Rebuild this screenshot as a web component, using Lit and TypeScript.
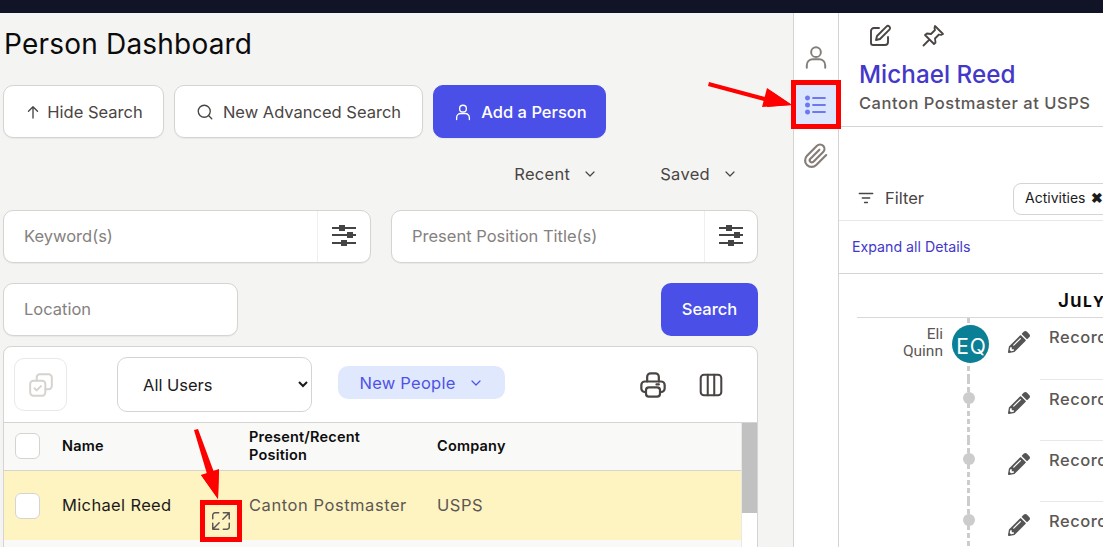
import { LitElement, html, css, svg } from "lit";
import { customElement } from "lit/decorators.js";

const ic = (size: number, body: unknown, sw = 2, cls = "") => html`<svg class=${cls} width=${size} height=${size} viewBox="0 0 24 24" fill="none" stroke="currentColor" stroke-width=${sw} stroke-linecap="round" stroke-linejoin="round">${body}</svg>`;

const person = svg`<circle cx="12" cy="7.5" r="4.5"/><path d="M3.5 22v-2.5a5.5 5.5 0 0 1 5.5-5.5h6a5.5 5.5 0 0 1 5.5 5.5V22"/>`;
const chevron = svg`<path d="M6 9l6 6 6-6"/>`;
const sliders = html`<svg class="sliders" width="24" height="22" viewBox="0 0 24 22"><g fill="#444"><rect x="0" y="3" width="24" height="2"/><rect x="0" y="10" width="24" height="2"/><rect x="0" y="18" width="24" height="2"/><rect x="7" y="1" width="6" height="6"/><rect x="15" y="8" width="6" height="6"/><rect x="9" y="16" width="6" height="6"/></g></svg>`;
const pencil = html`<svg class="pencil" width="22" height="22" viewBox="0 0 512 512"><path fill="#555" d="M497.9 142.100l-46.100 46.100c-4.700 4.700-12.300 4.700-17 0l-111-111c-4.700-4.700-4.700-12.300 0-17l46.100-46.100c18.700-18.700 49.100-18.700 67.900 0l60.100 60.100c18.800 18.700 18.800 49.100 0 67.900zM284.200 99.800L21.600 362.400.4 483.900c-2.900 16.400 11.400 30.600 27.800 27.800l121.500-21.300 262.600-262.600c4.700-4.700 4.700-12.300 0-17l-111-111c-4.800-4.700-12.400-4.700-17.100 0zM124.100 339.900c-5.500-5.500-5.500-14.300 0-19.800l154-154c5.500-5.500 14.300-5.500 19.800 0s5.500 14.300 0 19.800l-154 154c-5.500 5.500-14.300 5.500-19.800 0zM88 424h48v36.300l-64.500 11.300-31.100-31.100L51.700 376H88v48z"/></svg>`;

@customElement("app-root")
export class AppRoot extends LitElement {
  static styles = css`
    :host { display: block; position: relative; width: 1103px; height: 547px; overflow: hidden; font-family: Inter, "Liberation Sans", sans-serif; color: #4a4543; background: #fff; }
    .top { height: 13px; background: #111427; }
    .main { display: flex; height: 534px; }
    .left { width: 793px; flex: none; background: #f4f4f3; padding: 0 35px 0 3px; box-sizing: border-box; overflow: hidden; }
    h1 { margin: 0; font-size: 28px; font-weight: 400; color: #0b0b0b; line-height: 34px; padding: 14px 0 0 1px; letter-spacing: .2px; }
    .actions { display: flex; gap: 10px; margin-top: 24px; }
    .btn { height: 53px; box-sizing: border-box; display: flex; align-items: center; gap: 9px; border-radius: 10px; border: 1px solid #d6d4d1; background: #fff; font-size: 16.5px; justify-content: center; color: #4a4543; box-shadow: 0 1px 1px rgba(0,0,0,.05); }
    .b1 { width: 161px; gap: 5px; }
    .b2 { width: 249px; gap: 9px; }
    .primary { width: 173px; background: #4a4fe8; border-color: #4a4fe8; color: #fff; font-weight: 500; padding-left: 2px; }
    .recents { display: flex; justify-content: flex-end; height: 72px; align-items: center; gap: 62px; padding-right: 20px; font-size: 16.5px; letter-spacing: .3px; }
    .recents span { display: flex; align-items: center; gap: 12px; }
    .inputs { display: flex; gap: 20px; }
    .input { height: 53px; box-sizing: border-box; background: #fff; border: 1px solid #d6d4d1; border-radius: 10px; display: flex; align-items: center; font-size: 16.5px; color: #85817e; box-shadow: 0 1px 1px rgba(0,0,0,.05); }
    .input .label { flex: 1; padding: 0 0 2px 20px; }
    .input .tune { width: 53px; height: 100%; display: flex; align-items: center; justify-content: center; border-left: 1px solid #f0efed; box-sizing: border-box; padding: 0 1px 3px 0; }
    .w1 { width: 368px; }
    .w2 { width: 367px; }
    .row3 { display: flex; justify-content: space-between; margin-top: 20px; }
    .loc { width: 235px; }
    .search { width: 97px; height: 53px; box-sizing: border-box; padding-bottom: 2px; border-radius: 10px; background: #4a4fe8; color: #fff; font-weight: 500; font-size: 16.5px; display: flex; align-items: center; justify-content: center; }
    .card { margin-top: 10px; height: 260px; border: 1px solid #d6d4d1; border-radius: 8px 8px 0 0; background: #fff; box-sizing: border-box; overflow: hidden; }
    .tools { height: 76px; display: flex; align-items: center; border-bottom: 1px solid #d6d4d1; box-sizing: border-box; padding-left: 10px; }
    .copy { width: 53px; height: 53px; box-sizing: border-box; border: 1px solid #ebe9e7; border-radius: 10px; display: flex; align-items: center; justify-content: center; color: #d6d2ce; }
    select { margin-left: 50px; width: 195px; height: 55px; border: 1px solid #d6d4d1; border-radius: 10px; background: #fff; font: 16.5px Inter, sans-serif; color: #1b1b1b; padding-left: 21px; outline: none; }
    .pill { margin-left: 26px; width: 167px; height: 33px; border-radius: 10px; background: #dfe8fd; color: #4f52e6; font-size: 16.5px; letter-spacing: .25px; display: flex; align-items: center; justify-content: center; gap: 12px; margin-top: -4px; }
    .tool-r { margin-left: auto; display: flex; align-items: center; gap: 31px; padding-right: 33px; color: #4a4543; }
    .tbl { display: flex; height: 183px; }
    .rows { flex: 1; min-width: 0; }
    .scroll { width: 15px; background: #fff; border-left: 1px solid #e8e8e8; }
    .thumb { height: 90px; background: #c1c1c1; }
    .gr { display: grid; grid-template-columns: 58px 187px 188px 1fr; align-items: center; }
    .head { height: 48px; padding-bottom: 1px; background: #f9f9f8; border-bottom: 1px solid #d6d4d1; box-sizing: border-box; font-size: 14.5px; font-weight: 600; color: #0d0d0d; line-height: 18px; letter-spacing: .2px; }
    .rowy { height: 69px; background: #fdf4c1; font-size: 16.5px; color: #5c5754; letter-spacing: .55px; }
    .after { height: 66px; background: #f9f9f8; }
    .cb { margin-left: 11px; width: 25px; height: 26px; box-sizing: border-box; border: 1px solid #d6d4d1; border-radius: 6px; background: #fff; }
    .name { display: flex; justify-content: space-between; align-self: stretch; color: #1b1b1b; letter-spacing: .35px; }
    .name span { align-self: center; padding-bottom: 1px; }
    .cell { padding-bottom: 1px; }
    .name svg { align-self: flex-end; margin: 0 17px 8px 0; color: #5c5754; }
    .side { width: 46px; flex: none; box-sizing: border-box; border-left: 1px solid #d4d4d4; border-right: 1px solid #d4d4d4; background: #fff; display: flex; flex-direction: column; align-items: stretch; padding-top: 20px; color: #857d78; }
    .si { height: 49px; display: flex; align-items: center; justify-content: center; }
    .si.first { height: 47px; }
    .si.on { background: #dbe6fe; color: #6f78ee; }
    .si.clip { margin-top: 2px; }
    .right { flex: 1; min-width: 0; overflow: hidden; background: #fff; white-space: nowrap; }
    .rh { height: 114px; box-sizing: border-box; border-bottom: 1px solid #d4d4d4; padding-left: 20px; }
    .ricons { display: flex; gap: 29px; padding: 11px 0 0 9px; height: 24px; color: #4a4543; }
    .rname { font-size: 24.2px; font-weight: 500; color: #4338ca; line-height: 30px; margin-top: 12px; letter-spacing: .05px; }
    .rsub { font-size: 16.5px; font-weight: 500; color: #5c5754; line-height: 20px; margin-top: 3px; letter-spacing: .52px; }
    .filter { height: 94px; box-sizing: border-box; border-bottom: 1px solid #e7e7e7; display: flex; align-items: flex-end; padding: 0 0 5px 18px; font-size: 16.5px; }
    .filter .fl { display: flex; align-items: center; gap: 10px; height: 31px; padding-bottom: 2px; }
    .chip { margin-left: 89px; height: 32px; box-sizing: border-box; border: 1px solid #d6d4d1; border-radius: 8px; padding: 0 11px 3px; display: flex; align-items: center; gap: 6px; font-size: 14px; color: #1b1b1b; width: 140px; flex: none; }
    .expand { height: 53px; box-sizing: border-box; border-bottom: 1px solid #d4d4d4; display: flex; align-items: center; padding: 0 0 2px 13px; color: #4338ca; font-size: 14.2px; }
    .month { margin-left: 18px; height: 44px; box-sizing: border-box; border-bottom: 1px solid #d8d8d8; display: flex; align-items: center; padding: 9px 0 0 201px; font-size: 19px; font-weight: 600; font-variant: small-caps; color: #0b0b0b; letter-spacing: 1px; }
    .tr { display: grid; grid-template-columns: 86px 9px 37px 19px 22px 10px 1fr; margin-left: 18px; height: 61px; }
    .author { font-family: Roboto, sans-serif; font-size: 15.5px; color: #5c5754; text-align: right; line-height: 17px; padding-top: 8px; white-space: normal; }
    .node { grid-column: 3; display: flex; flex-direction: column; align-items: center; background: linear-gradient(#ccc 60%, transparent 60%) calc(50% - 2px) top / 3px 8px repeat-y; }
    .av { margin-top: 7px; width: 37px; height: 38px; box-sizing: border-box; padding: 4px 0 0 2px; border-radius: 50%; background: #0b7f95; color: #fff; font-size: 21px; display: flex; align-items: center; justify-content: center; letter-spacing: 1px; }
    .dot { margin: 13px 4px 0 0; width: 12px; height: 12px; border-radius: 50%; background: #ccc; }
    .pen { grid-column: 5; padding-top: 13px; }
    .txt { grid-column: 7; border-top: 1px solid #e7e7e7; font-size: 16.5px; font-weight: 500; color: #5c5754; padding: 9px 0 0 9px; letter-spacing: .5px; }
    .txt.first { border-top: none; padding-top: 9px; }
    .over { position: absolute; left: 0; top: 0; pointer-events: none; }
  `;

  row(first = false) {
    return html`<div class="tr">
      ${first ? html`<div class="author">Eli<br />Quinn</div>` : ""}
      <div class="node">${first ? html`<div class="av">EQ</div>` : html`<div class="dot"></div>`}</div>
      <div class="pen">${pencil}</div>
      <div class="txt ${first ? "first" : ""}">Recorded</div>
    </div>`;
  }

  render() {
    return html`
      <div class="top"></div>
      <div class="main">
        <div class="left">
          <h1>Person Dashboard</h1>
          <div class="actions">
            <div class="btn b1">${ic(18, svg`<path d="M12 20V5M6 11l6-6 6 6"/>`, 1.8)}Hide Search</div>
            <div class="btn b2">${ic(18, svg`<circle cx="11" cy="11" r="8"/><path d="M17 17l4 4"/>`, 1.8)}New Advanced Search</div>
            <div class="btn primary">${ic(18, person, 1.8)}Add a Person</div>
          </div>
          <div class="recents">
            <span>Recent ${ic(16, chevron, 1.8)}</span>
            <span>Saved ${ic(16, chevron, 1.8)}</span>
          </div>
          <div class="inputs">
            <div class="input w1"><div class="label">Keyword(s)</div><div class="tune">${sliders}</div></div>
            <div class="input w2"><div class="label">Present Position Title(s)</div><div class="tune">${sliders}</div></div>
          </div>
          <div class="row3">
            <div class="input loc"><div class="label">Location</div></div>
            <div class="search">Search</div>
          </div>
          <div class="card">
            <div class="tools">
              <div class="copy">${ic(26, svg`<rect x="2" y="8" width="14" height="14" rx="3"/><path d="M8 8V5a3 3 0 0 1 3-3h8a3 3 0 0 1 3 3v8a3 3 0 0 1-3 3h-3"/><path d="M6 15l2 2 4-4"/>`, 1.8)}</div>
              <select><option>All Users</option></select>
              <div class="pill">New People ${ic(16, chevron, 1.8)}</div>
              <div class="tool-r">
                ${ic(28, svg`<path d="M7 9V5a3 3 0 0 1 3-3h4a3 3 0 0 1 3 3v4"/><path d="M6 18H5a3 3 0 0 1-3-3v-3a3 3 0 0 1 3-3h14a3 3 0 0 1 3 3v3a3 3 0 0 1-3 3h-1"/><rect x="6" y="14" width="12" height="8" rx="2.5"/><path d="M15 11.5h2"/>`, 1.9)}
                ${ic(26, svg`<rect x="2.5" y="2.5" width="19" height="19" rx="3"/><path d="M9 2.5v19M15 2.5v19"/>`, 1.9)}
              </div>
            </div>
            <div class="tbl">
              <div class="rows">
                <div class="gr head"><div class="cb"></div><div>Name</div><div>Present/Recent<br />Position</div><div>Company</div></div>
                <div class="gr rowy">
                  <div class="cb"></div>
                  <div class="name"><span>Michael Reed</span>${ic(22, svg`<path d="M3 9.500V5.500a2.500 2.500 0 0 1 2.500-2.500H9.500M21 14.500v4a2.500 2.500 0 0 1-2.500 2.500H14.500"/><path d="M14.500 3H21v6.500M21 3l-7 7M9.500 21H3v-6.500M3 21l7-7"/>`, 1.6)}</div>
                  <div class="cell">Canton Postmaster</div>
                  <div class="cell">USPS</div>
                </div>
                <div class="after"></div>
              </div>
              <div class="scroll"><div class="thumb"></div></div>
            </div>
          </div>
        </div>
        <div class="side">
          <div class="si first">${ic(26, person, 1.8)}</div>
          <div class="si on">${ic(24, svg`<path d="M9 5h12M9 12h12M9 19h12"/><circle cx="3.5" cy="5" r="1.6" fill="currentColor"/><circle cx="3.5" cy="12" r="1.6" fill="currentColor"/><circle cx="3.5" cy="19" r="1.6" fill="currentColor"/>`, 1.8)}</div>
          <div class="si clip">${ic(26, svg`<path d="M21.4 11.1l-9.2 9.2a6 6 0 0 1-8.5-8.5l9.2-9.2a4 4 0 0 1 5.700 5.700l-9.2 9.2a2 2 0 0 1-2.800-2.800l8.500-8.500"/>`, 2)}</div>
        </div>
        <div class="right">
          <div class="rh">
            <div class="ricons">
              ${ic(24, svg`<path d="M11 4H6a3 3 0 0 0-3 3v12a2 2 0 0 0 2 2h12a3 3 0 0 0 3-3v-5"/><path d="M18.4 2.6a2.1 2.1 0 0 1 3 3L12 15l-4 1 1-4z"/>`, 1.9)}
              ${ic(24, svg`<path d="M14 2l8 8-2 1-2-.5-4 4 .5 4-1.500 1.500-9-9L6 9.500l4 .5 4-4-.5-2zM7.500 16.500L2.500 21.500"/>`, 1.8)}
            </div>
            <div class="rname">Michael Reed</div>
            <div class="rsub">Canton Postmaster at USPS</div>
          </div>
          <div class="filter">
            <div class="fl">${ic(18, svg`<path d="M3 6h18M7 12h10M10 18h4"/>`, 1.7)}Filter</div>
            <div class="chip">Activities <b>✖</b></div>
          </div>
          <div class="expand">Expand all Details</div>
          <div class="month">July</div>
          ${this.row(true)}${this.row()}${this.row()}${this.row()}
        </div>
      </div>
      <svg class="over" width="1103" height="547" viewBox="0 0 1103 547">
        <g fill="red" stroke="none">
          <path d="M709 82l60 16 2-7 21 14-25 2 1-5-60-16z"/>
          <path d="M767 88L792 105 762 107z"/>
          <path d="M194 430l4-1 17 46 4-6-1 30-17-24 6-1z"/>
          <path d="M201 475l18-6-1 30z"/>
        </g>
        <rect x="793.500" y="82.500" width="45" height="44" fill="none" stroke="red" stroke-width="5"/>
        <rect x="202.500" y="502.500" width="37" height="37" fill="none" stroke="red" stroke-width="5"/>
      </svg>
    `;
  }
}
